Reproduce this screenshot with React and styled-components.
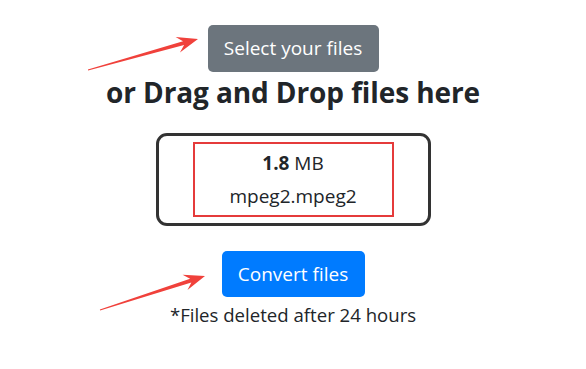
import { createGlobalStyle } from 'styled-components';
import styled from 'styled-components';

const GlobalStyle = createGlobalStyle`
  html, body {
    margin: 0;
    padding: 0;
    background: #fff;
  }
  body {
    font-family: "Open Sans", "Liberation Sans", sans-serif;
    color: #212529;
  }
`;

const Page = styled.div`
  position: relative;
  width: 586px;
  height: 369px;
  overflow: hidden;
`;

const Column = styled.div`
  display: flex;
  flex-direction: column;
  align-items: center;
  padding-top: 25px;
`;

const Button = styled.button`
  font-family: inherit;
  font-size: 19px;
  line-height: 27px;
  padding: 10px 12px;
  border: 0;
  border-radius: 5px;
  color: #fff;
  background: ${(p) => (p.$variant === 'primary' ? '#007bff' : '#6c757d')};
  width: ${(p) => p.$width}px;
  height: ${(p) => p.$height}px;
  margin-top: ${(p) => p.$gap || 0}px;
  white-space: nowrap;
  cursor: pointer;
`;

const Heading = styled.h3`
  margin: 2px 0 0;
  font-size: 28px;
  font-weight: 700;
  line-height: 36px;
  letter-spacing: -0.1px;
`;

const FileBox = styled.div`
  margin-top: 23px;
  width: 275px;
  height: 93px;
  box-sizing: border-box;
  border: 3px solid #333;
  border-radius: 11px;
  display: flex;
  justify-content: center;
  align-items: center;
`;

const Highlight = styled.div`
  width: 201px;
  height: 75px;
  box-sizing: border-box;
  border: 2px solid #e53b3b;
  display: flex;
  flex-direction: column;
  align-items: center;
  justify-content: center;
  font-size: 19px;
  line-height: 33px;
`;

const Size = styled.div`
  b {
    font-weight: 700;
  }
`;

const Note = styled.p`
  margin: 5px 0 0;
  font-size: 18.6px;
  line-height: 25px;
`;

const Arrows = styled.svg`
  position: absolute;
  left: 0;
  top: 0;
  pointer-events: none;
`;

const Arrow = ({ x1, y1, x2, y2 }) => {
  const dx = x2 - x1;
  const dy = y2 - y1;
  const len = Math.hypot(dx, dy);
  const ux = dx / len;
  const uy = dy / len;
  const px = -uy;
  const py = ux;
  const headLen = 21;
  const headW = 8;
  const bx = x2 - ux * headLen;
  const by = y2 - uy * headLen;
  const nx = bx + ux * 6;
  const ny = by + uy * 6;
  const points = [
    `${x2},${y2}`,
    `${bx + px * headW},${by + py * headW}`,
    `${nx + px * 2},${ny + py * 2}`,
    `${x1 + px * 0.4},${y1 + py * 0.4}`,
    `${x1 - px * 0.4},${y1 - py * 0.4}`,
    `${nx - px * 2},${ny - py * 2}`,
    `${bx - px * headW},${by - py * headW}`,
  ].join(' ');
  return <polygon points={points} fill="#f0413b" />;
};

export default function App() {
  return (
    <>
      <GlobalStyle />
      <Page>
        <Column>
          <Button $width={171} $height={47}>Select your files</Button>
          <Heading>or Drag and Drop files here</Heading>
          <FileBox>
            <Highlight>
              <Size>
                <b>1.8</b> MB
              </Size>
              <div>mpeg2.mpeg2</div>
            </Highlight>
          </FileBox>
          <Button $variant="primary" $width={143} $height={46} $gap={25}>
            Convert files
          </Button>
          <Note>*Files deleted after 24 hours</Note>
        </Column>
        <Arrows width="586" height="369">
          <Arrow x1={88} y1={70} x2={198} y2={39} />
          <Arrow x1={100} y1={310} x2={205} y2={276} />
        </Arrows>
      </Page>
    </>
  );
}
